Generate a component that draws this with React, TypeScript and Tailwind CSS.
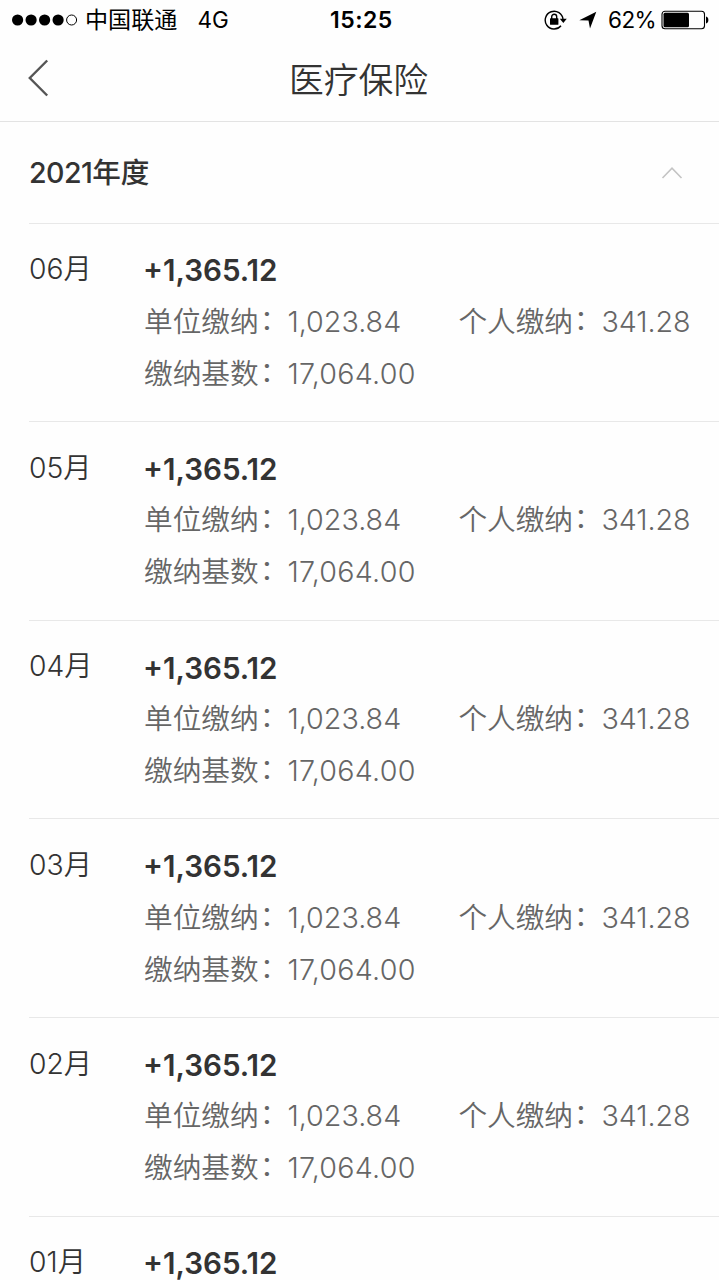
const MONTHS = ['06', '05', '04', '03', '02', '01']

const RECORD = {
  total: '+1,365.12',
  company: '1,023.84',
  personal: '341.28',
  base: '17,064.00',
}

export default function App() {
  return (
    <div className="w-[719px] h-[1280px] overflow-hidden bg-[#fefefe] font-[Inter,'Noto_Sans_CJK_SC',sans-serif] text-[#333]">
      <StatusBar />

      {/* Navigation bar */}
      <header className="h-[82px] grid grid-cols-[1fr_auto_1fr] items-center border-b border-[#e3e3e3]">
        <button className="ml-[28px] -mt-[6px] w-[21px]" aria-label="返回">
          <svg width="21" height="38" viewBox="0 0 21 38" fill="none" stroke="#555" strokeWidth="2.4">
            <path d="M19.2 1.5 1.8 19 19.2 36.5" />
          </svg>
        </button>
        <h1 className="text-[34.8px] leading-[40px] -mt-[2px] -ml-[2px] font-[350]">医疗保险</h1>
      </header>

      <main className="pl-[29px]">
        <div className="h-[100.6px] flex items-center justify-between pt-[2px] pr-[36px]">
          <h2 className="text-[28.6px] leading-[40px] font-medium">
            <span className="tracking-[-0.6px]">2021</span>年度
          </h2>
          <svg width="22" height="14" viewBox="0 0 22 14" fill="none" stroke="#c4c4c4" strokeWidth="1.6">
            <path d="M1.5 12 11 2.2 20.5 12" />
          </svg>
        </div>
        {MONTHS.map((month) => (
          <MonthRow key={month} month={month} />
        ))}
      </main>
    </div>
  )
}

function StatusBar() {
  return (
    <div className="h-[40px] grid grid-cols-[330px_1fr_auto] items-center pr-[10px] text-black">
      <div className="flex items-center pl-[11px]">
        <svg width="67" height="12" viewBox="0 0 67 12">
          {[6.6, 20.1, 33.6, 47.1].map((cx) => (
            <circle key={cx} cx={cx} cy="6" r="5.6" />
          ))}
          <circle cx="60.6" cy="6" r="5" fill="none" stroke="#000" />
        </svg>
        <span className="ml-[7px] text-[23.1px] leading-[40px]">中国联通</span>
        <span className="ml-[20px] text-[22.5px] leading-[40px]">4G</span>
      </div>
      <span className="text-[23px] leading-[40px] font-semibold tracking-[0.5px]">15:25</span>
      <div className="flex items-center">
        {/* Rotation lock */}
        <svg width="23" height="20" viewBox="0 0 23 20">
          <path d="M17 15.8A8.9 8.9 0 1 1 19 9.5" fill="none" stroke="#000" strokeWidth="1.4" />
          <path d="M15.8 8.8h7l-3.5 4.2z" />
          <rect x="6" y="8.3" width="8.4" height="6.4" rx="0.5" />
          <path d="M7.7 9V6.7a2.5 2.5 0 0 1 5 0V9" fill="none" stroke="#000" strokeWidth="1.4" />
        </svg>
        {/* Location arrow */}
        <svg className="ml-[12px]" width="18" height="18" viewBox="0 0 18 18">
          <path d="M17.3.8 11 17.5 9.5 9.5.3 9.3z" />
        </svg>
        <span className="ml-[11px] text-[22.5px] leading-[40px] tracking-[-0.6px]">62%</span>
        <svg className="ml-[5px]" width="48" height="20" viewBox="0 0 48 20">
          <rect x="1" y="1.2" width="42.5" height="17.6" rx="3" fill="none" stroke="#000" strokeWidth="1.1" />
          <rect x="2.5" y="2.8" width="25.5" height="14.4" rx="1.5" />
          <path d="M45 6.5c3.2.5 3.2 6.5 0 7z" />
        </svg>
      </div>
    </div>
  )
}

function MonthRow({ month }: { month: string }) {
  return (
    <section className="h-[198.6px] flex border-t border-[#e8e8e8] pt-[20.8px]">
      <div className="w-[115px] mt-[4.8px] text-[28.3px] leading-[40px] font-[350]">{month}月</div>
      <div className="text-[28.7px] text-[#666] font-[350]">
        <p className="-ml-px h-[51.4px] leading-[52px] font-semibold text-[29.6px] text-[#333]">{RECORD.total}</p>
        <div className="h-[52px] leading-[52px] flex">
          <Field className="w-[314.5px]" label="单位缴纳" value={RECORD.company} />
          <Field className="tracking-[-0.1px]" label="个人缴纳" value={RECORD.personal} />
        </div>
        <Field className="h-[52px] leading-[52px]" label="缴纳基数" value={RECORD.base} valueClass="tracking-[0.25px]" />
      </div>
    </section>
  )
}

interface FieldProps {
  label: string
  value: string
  className?: string
  valueClass?: string
}

function Field({ label, value, className, valueClass }: FieldProps) {
  return (
    <div className={className}>
      {label}
      <span className="relative -top-[2px] left-px">：</span>
      <span className={valueClass}>{value}</span>
    </div>
  )
}
